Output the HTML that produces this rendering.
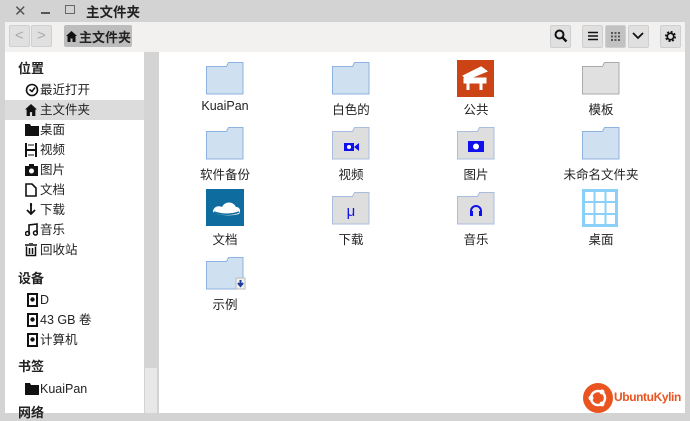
<!DOCTYPE html>
<html><head><meta charset="utf-8"><style>
*{margin:0;padding:0;box-sizing:border-box}
body{width:690px;height:419px;overflow:hidden;background:#d3d3d3;font-family:"Liberation Sans","Noto Sans CJK SC",sans-serif;font-size:12.5px;color:#222;position:relative}
.a{position:absolute}
.btn{position:absolute;border:1px solid #cfcfcf;background:#e0e0e0;border-radius:2px}
.si{position:absolute;left:40px;height:20px;line-height:20px;font-size:12.5px;color:#222;white-space:nowrap}
.sv{position:absolute;left:25px}
.sh{position:absolute;left:18px;font-weight:bold;font-size:13px;color:#222}
.lbl{position:absolute;width:120px;text-align:center;font-size:12.5px;color:#222}
</style></head><body>
<!-- title bar -->
<div class="a" style="left:14px;top:2px;font-size:15px;color:#555">✕</div>
<div class="a" style="left:41px;top:12px;width:9px;height:2px;background:#555"></div>
<div class="a" style="left:65px;top:5px;width:10px;height:9px;border:1.5px solid #666"></div>
<div class="a" style="left:86px;top:1px;font-size:13.5px;font-weight:bold;color:#222">主文件夹</div>
<!-- toolbar -->
<div class="a" style="left:5px;top:22px;width:680px;height:30px;background:#f2f1f0"></div>
<div class="btn" style="left:9px;top:25px;width:21px;height:22px"></div>
<div class="btn" style="left:31px;top:25px;width:21px;height:22px"></div>
<div class="a" style="left:15px;top:27px;color:#aaa;font-size:15px">&lt;</div>
<div class="a" style="left:37px;top:27px;color:#aaa;font-size:15px">&gt;</div>
<div class="a" style="left:64px;top:25px;width:68px;height:22px;background:#bdbdbd;border-radius:2px"></div>
<svg class="a" style="left:66px;top:31px" width="11" height="11" viewBox="0 0 11 11"><path d="M5.5 0L0 5h1.5v6h3V7.5h2V11h3V5H11z" fill="#111"/></svg>
<div class="a" style="left:79px;top:27px;font-weight:bold;font-size:13px;color:#222">主文件夹</div>
<div class="btn" style="left:550px;top:25px;width:21px;height:23px"></div>
<svg class="a" style="left:554px;top:29px" width="14" height="14"><circle cx="5.5" cy="5.5" r="4" fill="none" stroke="#111" stroke-width="2"/><path d="M8.5 8.5L12.5 12.5" stroke="#111" stroke-width="2.4"/></svg>
<div class="btn" style="left:582px;top:25px;width:21px;height:23px"></div>
<div class="btn" style="left:605px;top:25px;width:21px;height:23px;background:#c2c2c2"></div>
<div class="btn" style="left:628px;top:25px;width:21px;height:23px"></div>
<div class="btn" style="left:660px;top:25px;width:21px;height:23px"></div>
<svg class="a" style="left:587px;top:31px" width="12" height="10"><path d="M1 1.5h10M1 5h10M1 8.5h10" stroke="#111" stroke-width="1.6"/></svg>
<svg class="a" style="left:610px;top:31px" width="12" height="10" fill="#555"><rect x="1" y="1" width="2" height="2"/><rect x="4.5" y="1" width="2" height="2"/><rect x="8" y="1" width="2" height="2"/><rect x="1" y="4.5" width="2" height="2"/><rect x="4.5" y="4.5" width="2" height="2"/><rect x="8" y="4.5" width="2" height="2"/><rect x="1" y="8" width="2" height="2"/><rect x="4.5" y="8" width="2" height="2"/><rect x="8" y="8" width="2" height="2"/></svg>
<svg class="a" style="left:632px;top:32px" width="12" height="8"><path d="M1 1l5 5 5-5" fill="none" stroke="#111" stroke-width="1.8"/></svg>
<svg class="a" style="left:664px;top:30px" width="13" height="13" viewBox="0 0 13 13"><circle cx="6.5" cy="6.5" r="4.2" fill="none" stroke="#111" stroke-width="2.6" stroke-dasharray="1.8 1.5"/><circle cx="6.5" cy="6.5" r="3.2" fill="none" stroke="#111" stroke-width="1.6"/></svg>
<!-- sidebar -->
<div class="a" style="left:5px;top:52px;width:139px;height:361px;background:#fff"></div>
<div class="a" style="left:145px;top:52px;width:12px;height:361px;background:#e8e8e8"></div>
<div class="a" style="left:145px;top:52px;width:12px;height:316px;background:#d4d4d4"></div>
<div class="a" style="left:5px;top:100px;width:139px;height:20px;background:#dcdcdc"></div>
<div class="sh" style="top:58px">位置</div>
<svg class="sv" style="top:83px" width="14" height="14"><circle cx="7" cy="7" r="5.5" fill="none" stroke="#111" stroke-width="1.6"/><path d="M4.5 6.5l2.5 2 3-4" fill="none" stroke="#111" stroke-width="1.5"/></svg>
<div class="si" style="top:80px">最近打开</div>
<svg class="sv" style="top:104px" width="12" height="12" viewBox="0 0 11 11"><path d="M5.5 0L0 5h1.5v6h3V7.5h2V11h3V5H11z" fill="#111"/></svg>
<div class="si" style="top:100px">主文件夹</div>
<svg class="sv" style="top:124px" width="14" height="12"><path d="M0 0h5l1 2h8v10H0z" fill="#111"/></svg>
<div class="si" style="top:120px">桌面</div>
<svg class="sv" style="top:143px" width="12" height="14"><path d="M1 0v14M11 0v14M1 7h10" stroke="#111" stroke-width="2"/><path d="M3 2h6M3 12h6" stroke="#111" stroke-width="1"/></svg>
<div class="si" style="top:140px">视频</div>
<svg class="sv" style="top:164px" width="13" height="12"><rect x="0" y="2" width="13" height="10" fill="#111"/><rect x="4" y="0" width="5" height="3" fill="#111"/><circle cx="6.5" cy="7" r="2.5" fill="#fff"/></svg>
<div class="si" style="top:160px">图片</div>
<svg class="sv" style="top:183px" width="12" height="14"><path d="M1 1h6l4 4v8H1z" fill="none" stroke="#111" stroke-width="1.6"/></svg>
<div class="si" style="top:180px">文档</div>
<svg class="sv" style="top:203px" width="12" height="14"><path d="M6 0v10M2 7l4 4 4-4" fill="none" stroke="#111" stroke-width="1.8"/><circle cx="6" cy="2" r="1.2" fill="#111"/></svg>
<div class="si" style="top:200px">下载</div>
<svg class="sv" style="top:223px" width="13" height="13"><path d="M4 11V2l8-1v9" fill="none" stroke="#111" stroke-width="1.6"/><circle cx="2.5" cy="10.5" r="2" fill="none" stroke="#111" stroke-width="1.5"/><circle cx="10.5" cy="10" r="2" fill="none" stroke="#111" stroke-width="1.5"/></svg>
<div class="si" style="top:220px">音乐</div>
<svg class="sv" style="top:243px" width="12" height="14"><path d="M0 2h12M4 0h4" stroke="#111" stroke-width="1.6"/><path d="M1.5 3.5v9h9v-9M4.5 5v6M7.5 5v6" fill="none" stroke="#111" stroke-width="1.5"/></svg>
<div class="si" style="top:240px">回收站</div>
<div class="sh" style="top:268px">设备</div>
<svg class="sv" style="top:293px;left:27px" width="11" height="14"><rect x="1" y="1" width="9" height="12" fill="none" stroke="#111" stroke-width="2"/><circle cx="5.5" cy="6.5" r="2.2" fill="#111"/></svg>
<div class="si" style="top:290px">D</div>
<svg class="sv" style="top:313px;left:27px" width="11" height="14"><rect x="1" y="1" width="9" height="12" fill="none" stroke="#111" stroke-width="2"/><circle cx="5.5" cy="6.5" r="2.2" fill="#111"/></svg>
<div class="si" style="top:310px">43 GB 卷</div>
<svg class="sv" style="top:333px;left:27px" width="11" height="14"><rect x="1" y="1" width="9" height="12" fill="none" stroke="#111" stroke-width="2"/><circle cx="5.5" cy="6.5" r="2.2" fill="#111"/></svg>
<div class="si" style="top:330px">计算机</div>
<div class="sh" style="top:356px">书签</div>
<svg class="sv" style="top:383px" width="14" height="12"><path d="M0 0h5l1 2h8v10H0z" fill="#111"/></svg>
<div class="si" style="top:379px">KuaiPan</div>
<div class="sh" style="top:402px">网络</div>
<!-- main -->
<div class="a" style="left:159px;top:52px;width:526px;height:361px;background:#fff"></div>
<svg class="a" style="left:159px;top:52px" width="526" height="361">
<defs>
<g id="fb"><path d="M0.5 5.5h20l2-4h14.5v31.5h-36.5z" fill="#cfe0f0" stroke="#8fb3e0"/></g>
<g id="fg"><path d="M0.5 5.5h20l2-4h14.5v31.5h-36.5z" fill="#dedede" stroke="#a8bde0"/></g>
<g id="fgg"><path d="M0.5 5.5h20l2-4h14.5v31.5h-36.5z" fill="#e0e0e0" stroke="#aaa"/></g>
</defs>
<use href="#fb" x="47" y="9"/>
<use href="#fb" x="173" y="9"/>
<rect x="298" y="8" width="37" height="37" fill="#cc4415"/>
<path d="M306 24l16-8 4 3-17 7zM306 27h20v3h-20zM309 30v8M322 30v8" stroke="#fff" stroke-width="3" fill="#fff"/>
<use href="#fgg" x="423" y="9"/>
<use href="#fb" x="47" y="74"/>
<use href="#fg" x="173" y="74"/>
<rect x="185" y="91" width="10" height="8" fill="#1010ee"/><path d="M195 95l5-4v8z" fill="#1010ee"/><circle cx="190" cy="95" r="2" fill="#fff"/>
<use href="#fg" x="298" y="74"/>
<rect x="309" y="89" width="16" height="11" fill="#1010ee"/><circle cx="317" cy="94.5" r="3" fill="#fff"/>
<use href="#fb" x="423" y="74"/>
<rect x="47" y="137" width="38" height="37" fill="#0e6c9e"/>
<path d="M54 160c0-5 5-7 9-5 3-6 11-6 14 0 4 0 5 4 3 7-6 2-20 2-26-2z" fill="#fff"/>
<path d="M55 160c8 3 18 3 25 0" stroke="#0e6c9e" stroke-width="1.5" fill="none"/>
<use href="#fg" x="173" y="139"/>
<text x="192" y="164" text-anchor="middle" font-size="15" fill="#1010ee" font-family="Liberation Sans">μ</text>
<use href="#fg" x="298" y="139"/>
<path d="M312 163v-4a5 5 0 0 1 10 0v4" stroke="#1010ee" stroke-width="2" fill="none"/><rect x="311" y="159" width="3" height="5" fill="#1010ee"/><rect x="320" y="159" width="3" height="5" fill="#1010ee"/>
<rect x="424.5" y="138.5" width="33" height="35" fill="#fff" stroke="#8ad0f8" stroke-width="3"/>
<path d="M435.5 138v36M446.5 138v36M424 150h34M424 162h34" stroke="#8ad0f8" stroke-width="2"/>
<use href="#fb" x="47" y="204"/>
<rect x="77" y="226" width="9" height="11" fill="#f0f0f0" stroke="#bbb"/>
<path d="M81.5 228v5M79 231l2.5 3 2.5-3" stroke="#1a3d9e" stroke-width="2" fill="none"/>
</svg>
<div class="lbl" style="left:165px;top:99px">KuaiPan</div>
<div class="lbl" style="left:291px;top:99px">白色的</div>
<div class="lbl" style="left:416px;top:99px">公共</div>
<div class="lbl" style="left:541px;top:99px">模板</div>
<div class="lbl" style="left:165px;top:164px">软件备份</div>
<div class="lbl" style="left:291px;top:164px">视频</div>
<div class="lbl" style="left:416px;top:164px">图片</div>
<div class="lbl" style="left:541px;top:164px">未命名文件夹</div>
<div class="lbl" style="left:165px;top:229px">文档</div>
<div class="lbl" style="left:291px;top:229px">下载</div>
<div class="lbl" style="left:416px;top:229px">音乐</div>
<div class="lbl" style="left:541px;top:229px">桌面</div>
<div class="lbl" style="left:165px;top:294px">示例</div>
<!-- logo -->
<svg class="a" style="left:582px;top:382px" width="32" height="32"><circle cx="16" cy="16" r="15" fill="#e95420"/><circle cx="16" cy="16" r="7" fill="none" stroke="#fff" stroke-width="2.5"/><circle cx="9" cy="16" r="2.5" fill="#fff"/><circle cx="20" cy="10" r="2.5" fill="#fff"/><circle cx="20" cy="22" r="2.5" fill="#fff"/></svg>
<div class="a" style="left:614px;top:390px;font-size:12px;font-weight:bold;letter-spacing:-0.4px;color:#e95420">UbuntuKylin</div>
</body></html>
